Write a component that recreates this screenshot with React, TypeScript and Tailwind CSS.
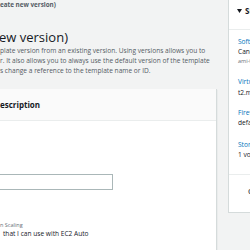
export default function App() {
  return (
    <div className="w-[250px] h-[250px] overflow-hidden bg-[#f2f3f3] flex font-['Open_Sans',sans-serif]">
      <div className="w-[217px] shrink-0 flex flex-col">
        <div className="h-[10px] leading-[10px] text-[6.3px] font-bold text-[#545b64] whitespace-nowrap">
          eate new version)
        </div>
        <div className="mt-[19px] -ml-px h-[16px] leading-[16px] text-[13px] text-[#16191f] whitespace-nowrap">
          ew version)
        </div>
        <div className="mt-[1px] text-[6.6px] leading-[10px] text-[#545b64] whitespace-nowrap">
          <div>plate version from an existing version. Using versions allows you to</div>
          <div>r. It also allows you to always use the default version of the template</div>
          <div>s change a reference to the template name or ID.</div>
        </div>
        <div className="mt-[13px] flex-1 flex flex-col border-r border-[#d5dbdb] shadow-[0_1px_1px_0_rgba(0,28,36,0.2)]">
          <div className="h-[32px] shrink-0 bg-[#fafafa] border-b border-[#eaeded] flex items-center">
            <span className="text-[8px] font-bold text-[#16191f] whitespace-nowrap leading-[10px]">escription</span>
          </div>
          <div className="flex-1 bg-white flex flex-col">
            <div className="mt-[53px] -ml-px h-[16px] w-[114px] border border-[#aab7b8] bg-white" />
            <div className="mt-[31px] text-[5.5px] leading-[8px] text-[#687078] whitespace-nowrap">n Scaling</div>
            <div className="ml-[3px] text-[6.6px] leading-[10px] text-[#16191f] whitespace-nowrap">
              that I can use with EC2 Auto
            </div>
          </div>
        </div>
      </div>
      <div className="ml-[11px] mt-[-8px] w-[80px] shrink-0 self-start bg-white border border-[#d5dbdb] flex flex-col">
        <div className="h-[37px] border-b border-[#eaeded] flex items-end pb-[13px] pl-[8px] gap-[3px]">
          <svg width="5" height="4" viewBox="0 0 5 4" className="mb-[3px]">
            <path d="M0 0 H5 L2.5 4 Z" fill="#16191f" />
          </svg>
          <span className="text-[8px] leading-[10px] font-bold text-[#16191f] whitespace-nowrap">Summary</span>
        </div>
        <div className="pl-[9px] pt-[7px] pb-[14px] border-b border-[#eaeded] flex flex-col text-[6.6px] leading-[10px] whitespace-nowrap">
          <div className="text-[#0073bb]">Software Image (AMI)</div>
          <div className="text-[#16191f]">Canonical, Ubuntu, 22.04 LTS</div>
          <div className="text-[5.5px] leading-[9px] text-[#687078]">ami-0a0e5d9c7acc336f1</div>
          <div className="mt-[11px] text-[#0073bb]">Virtual server type</div>
          <div className="mt-[1px] text-[#16191f]">t2.micro</div>
          <div className="mt-[10px] text-[#0073bb]">Firewall (security group)</div>
          <div className="text-[#16191f]">default</div>
          <div className="mt-[12px] text-[#0073bb]">Storage (volumes)</div>
          <div className="text-[#16191f]">1 volume(s) - 8 GiB</div>
        </div>
        <div className="h-[37px] pt-[12px] pl-[19px] text-[6.6px] leading-[10px] font-bold text-[#545b64] whitespace-nowrap">
          Cancel
        </div>
      </div>
    </div>
  );
}
